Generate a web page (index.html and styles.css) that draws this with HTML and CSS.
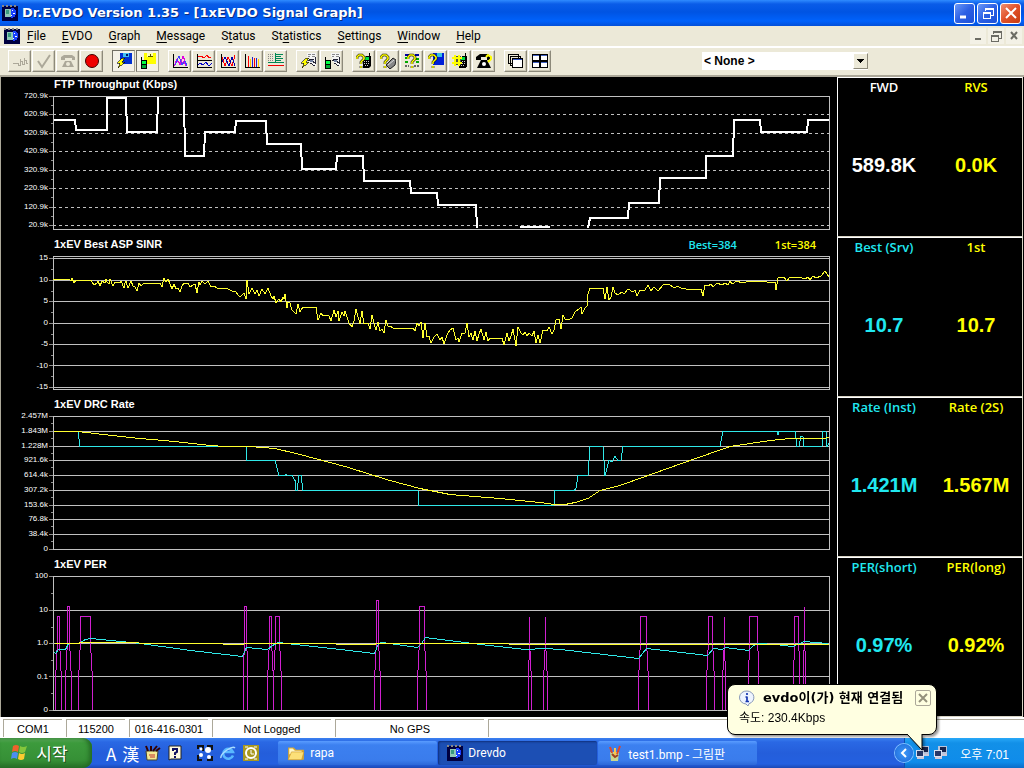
FILE: index.html
```html
<!DOCTYPE html>
<html lang="ko">
<head>
<meta charset="utf-8">
<title>Dr.EVDO Version 1.35 - [1xEVDO Signal Graph]</title>
<link rel="stylesheet" href="styles.css">
</head>
<body>
<svg class="defs" width="0" height="0" aria-hidden="true">
  <symbol id="app" viewBox="0 0 16 16"><path d="M0 1h16v15H0z" fill="#000040"/><path d="M0 1h2M4 1h2M8 1h2M12 1h2" stroke="#888" stroke-width="2"/><path d="M3 4h6v8H3z" fill="#8fc8b8"/><path d="M4 5h3v4H4z" fill="#3a9a80"/><path d="M9 3q6 0 5 6q-1 4-5 4z" fill="#1840ff"/><path d="M10 5h1v1h-1zM11 8h2v1h-2zM9 10h1v1H9z" fill="#fff"/></symbol>
  <symbol id="bolt" viewBox="0 0 16 16"><path d="M6 5L1 10h3l-2 5 7-6H6l3-4z" fill="#ff0" stroke="#000" stroke-width=".6"/></symbol>
  <symbol id="cell" viewBox="0 0 16 16"><path d="M1 4h1v3h5v9H1z" fill="#000"/><path d="M2 8h4v3H2z" fill="#0f4"/><path d="M2 12h4v3H2z" fill="#0a3"/></symbol>
  <symbol id="ask" viewBox="0 0 16 16"><path d="M1 6V4l2-2h3l2 2v2L5 9v2M5 13v2" fill="none" stroke="#000" stroke-width="2.600"/><path d="M1 6V4l2-2h3l2 2v2L5 9v2M5 13v2" fill="none" stroke="#ff0" stroke-width="1.600"/></symbol>
  <symbol id="handset" viewBox="0 0 16 16"><path d="M13 0h1v3h1v10l-2 2H7V6l3-3h3z" fill="#000"/><path d="M9 4h4v3H9z" fill="#0d4"/><path d="M8 8h1v1H8zM10 8h1v1h-1zM12 8h1v1h-1zM8 10h1v1H8zM10 10h1v1h-1zM12 10h1v1h-1zM9 12h1v1H9zM11 12h1v1h-1z" fill="#ccc"/></symbol>
  <symbol id="page" viewBox="0 0 16 16"><path d="M7 0h9v14l-4-3-4-3z" fill="#f4f4f4"/><path d="M8 1h3M12 1h3M8 3h2M12 3h3" stroke="#888"/><path d="M9 6h5M8 8l3-2M10 10l5 3M15 4v6l-3-2" stroke="#223" fill="none"/><path d="M10 7h3v2h-3z" fill="#7080a0"/></symbol>
  <symbol id="restore" viewBox="0 0 16 16"><path d="M5 6V3h8v7h-3M3 7h7v6H3zM3 8h7M5 4h8" fill="none" stroke="currentColor"/></symbol>
  <symbol id="nodes" viewBox="0 0 16 16"><path d="M5 1h9v8H5z" fill="#b8c4dc"/><path d="M7 2h6v5H7z" fill="#18244c"/><path d="M1 5h8v7H1z" fill="#d8e0f0"/><path d="M2 6h6v5H2z" fill="#283868"/><path d="M2 13h7M9 10h5" stroke="#d0c8d8" stroke-width="2"/></symbol>
</svg>

<header class="titlebar">
  <svg class="i16" shape-rendering="crispEdges"><use href="#app"/></svg>
  <h1>Dr.EVDO Version 1.35 - [1xEVDO Signal Graph]</h1>
  <div class="wincontrols">
    <button class="win" aria-label="Minimize"><svg class="i16"><path d="M3 12h6" stroke="#fff" stroke-width="3"/></svg></button>
    <button class="win" aria-label="Restore"><svg class="i16" shape-rendering="crispEdges"><use href="#restore"/></svg></button>
    <button class="win close" aria-label="Close"><svg class="i16"><path d="M3 3l10 10M13 3L3 13" stroke="#fff" stroke-width="2"/></svg></button>
  </div>
</header>

<nav class="menubar">
  <svg class="i16" shape-rendering="crispEdges"><use href="#app"/></svg>
  <div class="menus">
    <button><u>F</u>ile</button><button><u>E</u>VDO</button><button><u>G</u>raph</button><button><u>M</u>essage</button><button>S<u>t</u>atus</button><button>St<u>a</u>tistics</button><button><u>S</u>ettings</button><button><u>W</u>indow</button><button><u>H</u>elp</button>
  </div>
  <div class="mdi">
    <button aria-label="Minimize graph"><svg class="i16"><path d="M5 11h6" stroke="#6c6c64" stroke-width="2"/></svg></button>
    <button aria-label="Restore graph"><svg class="i16" shape-rendering="crispEdges"><use href="#restore"/></svg></button>
    <button aria-label="Close graph"><svg class="i16"><path d="M5 4l6 7M11 4l-6 7" stroke="#6c6c64" stroke-width="2"/></svg></button>
  </div>
</nav>

<div class="toolbar">
  <div class="group">
    <button aria-label="Connect"><svg class="i16" shape-rendering="crispEdges"><path d="M1 10h5v2h2V8h2v3h2V7h2v3h2M12 5v2M8 6v2" fill="none" stroke="#aca899"/></svg></button>
    <button aria-label="Apply"><svg class="i16"><path d="M2 8l4 6 8-12" fill="none" stroke="#aca899" stroke-width="2"/></svg></button>
    <button aria-label="Call"><svg class="i16"><path d="M1 7V4l3-2h8l3 2v3h-3V5H5v2zM2 14l3-6h6l3 6z" fill="#aca899"/><circle cx="8" cy="11" r="2" fill="#ece9d8"/></svg></button>
    <button aria-label="Stop"><svg class="i16"><circle cx="8" cy="8" r="6.500" fill="#f00000" stroke="#400"/></svg></button>
  </div>
  <div class="group">
    <button class="on" aria-label="Log to file"><svg class="i16" shape-rendering="crispEdges"><path d="M4 0h12v11H4z" fill="#0030d0"/><path d="M7 0h6v4H7z" fill="#40c0f0"/><path d="M10 1h2v2h-2z" fill="#001060"/><use href="#bolt"/></svg></button>
    <button class="on" aria-label="Log phone"><svg class="i16" shape-rendering="crispEdges"><path d="M4 0h12v11H4z" fill="#ff0"/><path d="M7 0h6v4H7z" fill="#ffa"/><path d="M8 3h5M10 1v2" stroke="#550"/><use href="#cell"/></svg></button>
  </div>
  <div class="group">
    <button aria-label="Signal graph"><svg class="i16" shape-rendering="crispEdges"><path d="M2 13L5 6l3 6 3-9 4 10M3 11l3-3 3 3 3-3 2 5" fill="none" stroke="#e000e0"/><path d="M3 12l4-9 3 9 3-4 2 5" fill="none" stroke="#4040ff"/><path d="M1.500 1v13.500h14" fill="none" stroke="#000"/></svg></button>
    <button aria-label="Dual graph"><svg class="i16" shape-rendering="crispEdges"><path d="M1.500 1v6.500h14M1.500 8v6.500h14" fill="none" stroke="#000"/><path d="M2 4l3-1 3 2 3-3 2 3 2-1" fill="none" stroke="#f00"/><path d="M2 12l2-2 3 2 3-3 3 4 3-3" fill="none" stroke="#00c"/></svg></button>
    <button aria-label="Line graph"><svg class="i16" shape-rendering="crispEdges"><path d="M2 4l3 9 3-9 4 9 3-11" fill="none" stroke="#f00"/><path d="M2 9l3-5 4 9 3-9 3 9" fill="none" stroke="#00a"/><path d="M1.500 1v13.500h14" fill="none" stroke="#000"/></svg></button>
    <button aria-label="Bar graph"><svg class="i16" shape-rendering="crispEdges"><path d="M4.500 3v11M10.500 5v9" stroke="#f00"/><path d="M6.500 6v8M14.500 6v8" stroke="#fc0"/><path d="M8.500 4v10M12.500 5v9" stroke="#22c"/><path d="M1.500 1v13.500h14" fill="none" stroke="#000"/></svg></button>
    <button aria-label="Message list"><svg class="i16" shape-rendering="crispEdges"><path d="M0 1.500h6M0 3.500h6M0 5.500h6M0 7.500h6" stroke="#888" stroke-dasharray="1 1"/><path d="M7.500 0v9M8 1.500h7M8 3.500h5M8 5.500h7M8 7.500h5M0 9.500h16" stroke="#085"/><path d="M0 13l3-1 3 1 3-1 3 1 4-1" fill="none" stroke="#e00"/></svg></button>
  </div>
  <div class="group">
    <button aria-label="Quick view"><svg class="i16" shape-rendering="crispEdges"><use href="#page"/><use href="#bolt"/></svg></button>
    <button aria-label="Phone view"><svg class="i16" shape-rendering="crispEdges"><use href="#page"/><use href="#cell"/></svg></button>
  </div>
  <div class="group">
    <button aria-label="Phone status"><svg class="i16"><use href="#handset"/><use href="#ask"/></svg></button>
    <button aria-label="Phone book"><svg class="i16"><path d="M6 12l7-7 3 2-1 5-5 4z" fill="#888" stroke="#222"/><path d="M8 12l6-5" stroke="#ddd"/><use href="#ask"/></svg></button>
    <button aria-label="Parameter status"><svg class="i16"><path d="M1 2h4M11 2h4" stroke="#0000a0" stroke-width="2"/><path d="M1 5h3M11 6h4M1 9h3M12 9h3" stroke="#0a0" stroke-width="2"/><path d="M1 13h4M10 13h5" stroke="#666" stroke-width="2" stroke-dasharray="2 1"/><svg x="3" width="16" height="16"><use href="#ask"/></svg></svg></button>
    <button aria-label="File status"><svg class="i16"><path d="M5 0h11v12H5z" fill="#0020d8"/><path d="M9 0h5v4H9z" fill="#38c0e0"/><use href="#ask"/></svg></button>
    <button aria-label="Dial number"><svg class="i16" shape-rendering="crispEdges"><use href="#handset"/><path d="M2 3h7v9H2z" fill="#554"/><path d="M3 2v11M7 2v11M0 5h10M0 10h10" stroke="#ff0" stroke-width="2"/></svg></button>
    <button aria-label="Call status"><svg class="i16"><path d="M0 7V4l4-3h8l3 3v3h-4V4H5v3zM1 15l4-8h6l4 8z" fill="#000"/><circle cx="8" cy="11" r="2" fill="#fff"/><path d="M10 4l2-2 3 2v2l-3 3" fill="none" stroke="#ff0" stroke-width="2"/></svg></button>
  </div>
  <div class="group">
    <button aria-label="Cascade"><svg class="i16" shape-rendering="crispEdges"><path d="M.5 1.500h10v9H.5zM2.500 3.500h10v9h-10z" fill="#ece9d8" stroke="#000"/><path d="M4.500 5.500h10v9h-10z" fill="#fff" stroke="#000"/><path d="M5 6.500h9" stroke="#3050c0"/></svg></button>
    <button aria-label="Tile"><svg class="i16" shape-rendering="crispEdges"><path d="M.5 1.500h15v13H.5z" fill="#fff" stroke="#000"/><path d="M1 2.500h14M1 9.500h14" stroke="#4060c0"/><path d="M8 1v14M1 8h14" stroke="#000" stroke-width="2"/></svg></button>
  </div>
  <span class="combo"><select aria-label="Marker"><option>&lt; None &gt;</option></select><svg class="drop" viewBox="0 0 16 16" shape-rendering="crispEdges"><path d="M4 6h8l-4 4z" fill="#000"/></svg></span>
</div>

<main>
  <section class="row">
    <div class="axis a1"><span>720.9k</span><span>620.9k</span><span>520.9k</span><span>420.9k</span><span>320.9k</span><span>220.9k</span><span>120.9k</span><span>20.9k</span></div>
    <div class="chart">
      <h2>FTP Throughput (Kbps)</h2>
      <svg class="plot" viewBox="49 96 781 134" preserveAspectRatio="none">
        <path class="tick" d="M49 96.500h4M49 114.500h4M49 133.500h4M49 151.500h4M49 170.500h4M49 188.500h4M49 207.500h4M49 225.500h4M51 105.500h2M51 123.500h2M51 142.500h2M51 160.500h2M51 179.500h2M51 197.500h2M51 216.500h2"/>
        <path class="grid dash" d="M53 114.500H829M53 133.500H829M53 151.500H829M53 170.500H829M53 188.500H829M53 207.500H829M53 225.500H829"/>
        <path class="grid" d="M53.500 96.500H829.500V229.500H53.500z"/>
        <path class="line white" d="M54 120H75L76 130H107V98H126L127 132H157L158 97M184 97L185 156H204L205 132H235L236 121H266L267 144H301L302 169H336L337 156H363L364 181H410L411 193H437L438 205H476L477 228M520 227H550M588 228L590 218H628L629 203H659L660 178H706V156H733L734 120H760L761 132H807L808 120H829"/>
      </svg>
    </div>
    <dl class="values"><div class="w"><dt>FWD</dt><dd>589.8K</dd></div><div class="y"><dt>RVS</dt><dd>0.0K</dd></div></dl>
  </section>

  <section class="row">
    <div class="axis a2"><span>15</span><span>10</span><span>5</span><span>0</span><span>-5</span><span>-10</span><span>-15</span></div>
    <div class="chart">
      <div class="head"><h2>1xEV Best ASP SINR</h2><span class="c">Best=384</span><span class="y">1st=384</span></div>
      <svg class="plot" viewBox="49 256 781 134" preserveAspectRatio="none">
        <path class="tick" d="M49 258.500h4M49 280.500h4M49 301.500h4M49 323.500h4M49 344.500h4M49 365.500h4M49 387.500h4M51 269.500h2M51 291.500h2M51 312.500h2M51 334.500h2M51 355.500h2M51 376.500h2"/>
        <path class="grid" d="M53.500 256.500H829.500V389.500H53.500zM53 258.500H829M53 280.500H829M53 301.500H829M53 323.500H829M53 344.500H829M53 365.500H829M53 387.500H829"/>
        <polyline class="line yellow" points="53,280 56,279 58,280 62,279 66,279 70,280 71,281 72,278 74,283 76,280 91,280 94,285 97,283 98,281 100,286 102,281 105,283 106,279 107,282 109,284 110,279 113,286 115,282 118,282 120,283 121,281 124,288 125,283 126,281 128,288 131,281 133,286 135,287 137,291 139,283 141,286 144,283 160,283 162,287 164,278 166,282 168,279 170,284 172,289 174,284 176,289 178,288 180,292 182,286 184,283 186,284 188,283 190,287 195,284 197,293 199,282 200,285 202,281 205,284 208,281 211,287 214,286 217,288 226,288 232,291 235,291 239,296 241,296 244,293 246,299 247,280 249,294 252,288 255,294 257,290 259,296 262,289 265,294 268,288 271,296 273,299 274,296 276,303 279,299 281,302 283,297 284,299 285,294 287,308 288,302 290,303 292,310 296,314 298,304 300,312 303,307 316,307 318,320 321,313 323,316 325,315 329,316 331,321 334,310 336,317 338,311 339,321 342,312 344,316 345,311 349,323 352,327 354,321 356,309 360,324 362,311 364,324 368,323 370,329 372,315 375,327 376,330 378,322 380,331 382,329 384,333 386,320 388,326 390,326 393,328 413,328 415,331 417,323 419,326 421,322 423,338 425,323 427,337 429,336 431,343 434,337 437,334 440,340 442,337 444,344 447,335 450,330 453,328 456,340 458,338 459,342 462,333 465,333 467,323 469,337 471,333 473,340 475,331 477,341 479,334 481,329 484,340 486,332 488,341 490,338 502,338 504,345 507,333 509,341 511,336 513,329 516,346 518,327 521,333 523,335 525,332 527,336 529,333 532,336 534,331 536,343 538,335 540,343 543,330 547,331 549,327 552,334 554,330 556,320 559,319 561,329 563,315 565,319 568,320 572,318 575,312 579,309 581,307 582,314 585,308 587,306 587,297 590,288 603,288 605,299 607,287 609,300 611,297 613,287 615,293 618,295 622,292 624,294 628,289 633,292 635,290 637,296 640,290 645,290 648,285 651,291 654,287 658,291 663,285 668,284 675,288 677,286 681,288 686,289 701,289 703,296 705,285 708,286 711,284 713,287 717,283 722,285 725,283 728,285 730,281 732,284 737,281 742,283 750,281 760,281 767,282 775,282 776,290 778,278 784,277 787,281 790,277 802,278 805,279 808,277 810,280 813,276 816,278 821,276 825,271 829,277"/>
      </svg>
    </div>
    <dl class="values"><div class="c"><dt>Best (Srv)</dt><dd>10.7</dd></div><div class="y"><dt>1st</dt><dd>10.7</dd></div></dl>
  </section>

  <section class="row">
    <div class="axis a3"><span>2.457M</span><span>1.843M</span><span>1.228M</span><span>921.6k</span><span>614.4k</span><span>307.2k</span><span>153.6k</span><span>76.8k</span><span>38.4k</span><span>0</span></div>
    <div class="chart">
      <h2>1xEV DRC Rate</h2>
      <svg class="plot" viewBox="49 416 781 134" preserveAspectRatio="none">
        <path class="tick" d="M49 416.500h4M49 431.500h4M49 446.500h4M49 460.500h4M49 475.500h4M49 490.500h4M49 505.500h4M49 519.500h4M49 534.500h4M49 549.500h4M51 423.500h2M51 438.500h2M51 453.500h2M51 467.500h2M51 482.500h2M51 497.500h2M51 512.500h2M51 526.500h2M51 541.500h2"/>
        <path class="grid" d="M53.500 416.500H829.500V549.500H53.500zM53 431.500H829M53 446.500H829M53 460.500H829M53 475.500H829M53 490.500H829M53 505.500H829M53 519.500H829M53 534.500H829"/>
        <g transform="translate(0 .5)">
          <path class="line cyan" d="M54 431H78L80 446H246L247 460H275L279 475H285L286 474L288 475H292L295 480L296 490H297L299 475H301L303 490H418L419 505H554L555 490H574L576 488L578 475H588L590 446H603L605 475L609 460L612 461L615 456L618 460H621L623 446H720L723 431H777L778 434L779 431H795L797 446H799L801 436H803L804 446H822L823 431H826L827 446L829 443"/>
          <polyline class="line yellow" points="54,431 78,431 103,434 140,438 175,441 210,445 225,446 250,446 275,448 300,454 345,466 390,480 420,488 450,494 500,498 540,502 555,504 565,504 575,502 588,498 600,490 620,485 648,475 690,460 730,446 750,443 770,440 790,438 823,438 829,437"/>
        </g>
      </svg>
    </div>
    <dl class="values"><div class="c"><dt>Rate (Inst)</dt><dd>1.421M</dd></div><div class="y"><dt>Rate (2S)</dt><dd>1.567M</dd></div></dl>
  </section>

  <section class="row">
    <div class="axis a4"><span>100</span><span>10</span><span>1.0</span><span>0.1</span><span>0</span></div>
    <div class="chart last">
      <h2>1xEV PER</h2>
      <svg class="plot" viewBox="49 576 781 135" preserveAspectRatio="none">
        <path class="tick" d="M49 576.500h4M49 610.500h4M49 643.500h4M49 676.500h4M49 710.500h4M51 593.500h2M51 627.500h2M51 660.500h2M51 693.500h2"/>
        <path class="grid" d="M53.500 576.500H829.500V710.500H53.500zM53 610.500H829M53 643.500H829M53 676.500H829"/>
        <g transform="translate(.5 .5)">
          <path class="line magenta" d="M55 709V680L57 640V616H59V640L61 680V709M65 709V680L67 640V606H69V640L71 680V709M78 709V680L80 640V616H90V643L92 680V709M243 709V680L244 630V606H246V640L247 660V709M267 709V680L269 640V616H271V640L273 680V709V680L275 640V616H279V640L281 680V709M374 709V680L376 640V600H378V640L380 680V709M417 709V680L419 640V606H424V640L426 680V709M528 709V680L529 640V616V640L531 680V709M543 709V680L545 640V616V640L547 680V709M638 709V680L640 640V616H646V640L648 680V709M706 709V680L708 640V616H712V640L714 680V709M722 709V680L724 640V616V640L725 680V709M748 709V680L749 640V616H757V640L758 660V709M793 709V680L794 640V616H798V640L799 660V709M803 709V660L804 640V606V640L805 660V709"/>
          <polyline class="line cyan" points="54,652 55,653 58,649 65,649 68,643 78,643 85,639 91,638 100,639 140,643 190,650 242,656 246,647 267,649 272,645 278,642 295,644 340,649 374,653 378,643 382,642 417,647 421,643 425,637 440,639 480,644 525,649 545,648 560,649 638,658 646,648 655,649 707,655 713,648 722,649 725,647 748,650 753,645 758,643 775,644 792,646 799,643 804,641 815,642 828,643"/>
          <polyline class="line yellow" points="54,643 78,643 80,642 138,642 139,643 222,643 223,644 243,644 244,643 335,643 336,644 374,644 376,643 508,643 509,644 828,644"/>
        </g>
      </svg>
    </div>
    <dl class="values"><div class="c"><dt>PER(short)</dt><dd>0.97%</dd></div><div class="y"><dt>PER(long)</dt><dd>0.92%</dd></div></dl>
  </section>
</main>

<footer class="statusbar">
  <span>COM1</span><span>115200</span><span class="num">016-416-0301</span><span class="log">Not Logged</span><span class="gps">No GPS</span><span class="rest"></span>
</footer>

<div class="taskbar">
  <button class="start"><svg class="flag" viewBox="0 0 20 18"><path d="M3 3q3-2 6 0L8 9Q5 7 2 9z" fill="#f0622c"/><path d="M10 3q3 2 7 0l-2 6q-3 2-6 0z" fill="#84c63c"/><path d="M2 10q3-2 6 0l-1 6q-3-2-6 0z" fill="#4c8ef0"/><path d="M9 10q3 2 6 0l-1 6q-3 2-6 0z" fill="#fccc30"/></svg>시작</button>
  <div class="ime"><button aria-label="Input mode">A</button><button aria-label="Hanja">漢</button>
    <button aria-label="Drawing"><svg class="i16"><path d="M1 6h12l-1 9H2z" fill="#f4e890" stroke="#443"/><path d="M3 6L1 1M6 6V1M8 6l4-5M11 6l4-3" stroke="#300" stroke-width="2"/><path d="M4 10h6M5 12h5" stroke="#c03030"/></svg></button>
    <button aria-label="Help"><svg class="i16"><path d="M2 1h12v13H4l-2 1z" fill="#fffbe0" stroke="#222"/><path d="M6 6V4h4v3L8 8v2M8 11v2" fill="none" stroke="#101060" stroke-width="2"/></svg></button></div>
  <div class="quick">
    <button aria-label="Network"><svg class="i16"><path d="M1 4V1h5v5M10 1h5v4M1 10v5h4M10 15h5v-4" fill="none" stroke="#111" stroke-width="2"/><circle cx="4" cy="4" r="1.500" fill="#fff"/><circle cx="11" cy="5" r="3" fill="#fff"/><circle cx="4" cy="10" r="2" fill="#fff"/><circle cx="12" cy="12" r="2" fill="#fff"/></svg></button>
    <button aria-label="Internet Explorer"><svg class="i16"><path d="M13 10.500A5 5 0 1 1 13 7H5" fill="none" stroke="#58b8ff" stroke-width="2.500"/><path d="M1 13Q0 10 7 5q6-4 8-2" fill="none" stroke="#a8dcff" stroke-width="1.500"/></svg></button>
    <button aria-label="Outlook"><svg class="i16"><path d="M0 0h16v16H0z" fill="#a89820"/><circle cx="8" cy="8" r="5" fill="#a89820" stroke="#fff" stroke-width="2"/><path d="M8 5v4h3M2 2h3M2 14h3M11 2h3M11 14h3" fill="none" stroke="#fff"/></svg></button>
  </div>
  <div class="tasks">
    <button><svg class="i18" viewBox="0 0 16 16"><path d="M1 3h5l2 2h7v9H1z" fill="#d8a830"/><path d="M2 4h3l2 2h6v3H2z" fill="#fff8c8"/><path d="M1 14L4 7h11l-2 7z" fill="#fce078" stroke="#c89020" stroke-width=".5"/></svg>rapa</button>
    <button class="active"><svg class="i16" shape-rendering="crispEdges"><use href="#app"/></svg>Drevdo</button>
    <button><svg class="i16"><path d="M3 7h9l-1 9H4z" fill="#c8d890"/><path d="M5 8L3 2M10 9l3-8" stroke="#e04828" stroke-width="2"/><path d="M8 10V3" stroke="#f8c850" stroke-width="2"/><path d="M5 9l3 3 3-2" stroke="#a04020" fill="none" stroke-width="2"/></svg>test1.bmp - 그림판</button>
  </div>
  <div class="tray">
    <button class="expand" aria-label="Show hidden icons"><svg viewBox="0 0 18 18" width="18" height="18"><path d="M11 5L7 9l4 4" fill="none" stroke="#fff" stroke-width="2"/></svg></button>
    <svg class="i16"><use href="#nodes"/></svg><svg class="i16"><use href="#nodes"/></svg>
    <time>오후 7:01</time>
  </div>
  <aside class="balloon" role="status">
    <div class="bhead"><svg class="i16" viewBox="0 0 16 16"><path d="M8 1a7 6.500 0 0 1 2 12.700L9 16l-2-2A7 6.500 0 0 1 8 1z" fill="#eef4ff" stroke="#8898b8"/><path d="M8 6.500v5M6.500 7H8M6.500 11.500h3.500M8 3v2" stroke="#1838b0" stroke-width="1.700"/></svg>
    <strong>evdo이(가) 현재 연결됨</strong>
    <button aria-label="Close notification"><svg viewBox="0 0 14 14" width="14" height="14"><path d="M3 3l8 8M11 3l-8 8" stroke="#94917c" stroke-width="2"/></svg></button></div>
    <p>속도: 230.4Kbps</p>
    <svg class="tail" viewBox="0 0 18 18"><path d="M1 0L16 16V0" fill="#ffffe1" stroke="#000"/></svg>
  </aside>
</div>
</body>
</html>
```
FILE: styles.css
```css
* { box-sizing: border-box; }
body {
  margin: 0;
  min-height: 100vh;
  display: flex;
  flex-direction: column;
  background: #ece9d8;
  color: #000;
  font-family: "Liberation Sans", "Noto Sans CJK KR", sans-serif;
  font-size: 12px;
}
button { margin: 0; padding: 0; border: 0; background: none; color: inherit; font: inherit; display: flex; align-items: center; justify-content: center; }
h1, h2, dl, dd, p { margin: 0; }
svg { display: block; flex: none; }
.defs { position: absolute; }
.i16 { width: 16px; height: 16px; }
.i18 { width: 18px; height: 18px; }

/* Title bar */
.titlebar {
  height: 26px;
  display: flex;
  align-items: center;
  gap: 4px;
  padding: 0 3px 0 2px;
  color: #fff;
  background: linear-gradient(#2f8bff 0, #0a5ce8 4px, #0054e3 12px, #0062fc 21px, #0450d8 100%);
}
.titlebar h1 { flex: 1; font: bold 13px/20px "DejaVu Sans", sans-serif; text-shadow: 1px 1px #0a2a80; white-space: nowrap; }
.wincontrols { display: flex; gap: 2px; }
.win { width: 21px; height: 21px; border: 1px solid #fff; border-radius: 3px; background: linear-gradient(135deg, #6a98f8, #2c60e4 50%, #1c50d8); }
.close { background: linear-gradient(135deg, #f09070, #e05028 50%, #c83c10); }

/* Menu bar */
.menubar { height: 21px; display: flex; align-items: center; padding: 0 2px 0 4px; border-bottom: 1px solid #fff; }
.menus { flex: 1; display: flex; gap: 16px; padding-left: 7px; font-family: Roboto, sans-serif; font-size: 12px; line-height: 16px; }
.menus button { display: block; }
.menus u { text-underline-offset: 2px; }
.mdi { display: flex; gap: 2px; color: #6c6c64; }
.mdi button { width: 16px; height: 16px; background: #f3f1e6; }

/* Toolbar */
.toolbar { height: 30px; display: flex; align-items: center; gap: 9px; padding: 0 156px 1px 8px; border-top: 1px solid #fff; border-bottom: 2px solid #aca899; }
.group { display: flex; gap: 1px; }
.toolbar button { width: 23px; height: 22px; border: 1px solid; border-color: #fff #8c897a #8c897a #fff; box-shadow: inset -1px -1px #cac6b4; }
.toolbar .on { border-color: #716f64 #aaa79a #aaa79a #716f64; background: #f4f2e8; box-shadow: none; }
.combo { display: grid; width: 166px; height: 18px; margin-left: auto; background: #fff; align-items: center; }
.combo > * { grid-area: 1 / 1; }
.combo select { appearance: none; width: 100%; height: 18px; border: 0; border-radius: 0; padding: 0 18px 0 2px; background: #fff; color: #000; font: bold 12px "Liberation Sans", sans-serif; }
.drop { width: 15px; height: 16px; justify-self: end; background: #ece9d8; border: 1px solid; border-color: #fff #8c897a #8c897a #fff; pointer-events: none; }

/* Graph rows */
main { flex: 1; display: grid; grid-template-rows: repeat(4, minmax(160px, 1fr)); background: #000; color: #fff; border-left: 1px solid #aca899; padding-right: 1px; }
.row { display: grid; grid-template-columns: 48px minmax(0, 1fr) 186px; }
.axis { display: flex; flex-direction: column; justify-content: space-between; align-items: flex-end; font-size: 8px; line-height: 12px; }
.axis span { padding-right: 1px; }
.a1 { padding: 13px 0 6px; }
.a2 { padding: 15px 0 4px; }
.a3 { padding: 13px 0 2px; }
.a4 { padding: 13px 0 1px; }
.chart { display: flex; flex-direction: column; padding: 0 7px 7px 0; }
.last { padding-bottom: 6px; }
.chart h2 { height: 19px; padding-left: 5px; font-size: 11px; line-height: 15px; flex: none; }
.head { display: flex; gap: 38px; padding-right: 14px; font: 600 11px/16px "Open Sans", sans-serif; height: 19px; }
.head h2 { flex: 1; font-family: "Liberation Sans", sans-serif; }
.plot { flex: 1; width: 100%; min-height: 0; height: 134px; shape-rendering: crispEdges; }
.plot path, .plot polyline { fill: none; vector-effect: non-scaling-stroke; }
.grid { stroke: #c0c0c0; }
.tick { stroke: #909090; }
.dash { stroke-dasharray: 3 3; }
.white { stroke: #fff; stroke-width: 2; }
.yellow { stroke: #ffff30; }
.cyan { stroke: #30e8e8; }
.magenta { stroke: #d020d0; }
.values { display: grid; grid-template-columns: 1fr 1fr; border: 1px solid; border-color: #fff #d8d4c4 #d8d4c4 #fff; text-align: center; }
.values div { display: flex; flex-direction: column; }
.values dt { font: 600 13px/18px "Open Sans", sans-serif; }
.values dd { flex: 1; display: flex; align-items: center; justify-content: center; font-weight: bold; font-size: 20px; padding-bottom: 2px; }
.w { color: #fff; }
.y { color: #ff0; }
.c { color: #20e8f0; }

/* Status bar */
.statusbar { height: 21px; display: flex; gap: 4px; padding: 2px 0 1px 3px; background: #fff; font-size: 11px; line-height: 18px; text-align: center; }
.statusbar span { width: 59px; border: solid #aca899; border-width: 1px 0 0 1px; white-space: nowrap; }
.statusbar .num { width: 79px; }
.statusbar .log { width: 119px; }
.statusbar .gps { width: 149px; }
.statusbar .rest { width: auto; flex: 1; }

/* Taskbar */
.taskbar { position: relative; height: 30px; display: flex; color: #fff; background: linear-gradient(#3a80f0 0, #2a68e4 4px, #245edb 50%, #2460e0 26px, #1c48b4 100%); }
.start { width: 92px; gap: 6px; padding: 0 14px 2px 0; border-radius: 0 9px 9px 0; font-size: 17px; background: linear-gradient(#60b060 0, #3c9a3c 5px, #369036 22px, #287028 100%); box-shadow: inset -3px 0 4px #246c24; text-shadow: 1px 1px #205020; }
.flag { width: 20px; height: 18px; }
.ime { display: flex; align-items: center; gap: 6px; padding-left: 14px; font: 17px "Noto Sans CJK KR", sans-serif; }
.quick { display: flex; align-items: center; gap: 7px; padding-left: 14px; }
.tasks { flex: 1; display: flex; gap: 1px; padding: 3px 0 3px 19px; }
.tasks button { width: 159px; justify-content: flex-start; gap: 5px; padding: 0 9px; border-radius: 2px; background: linear-gradient(#5a9cff, #3c80f0 4px, #3a7cec 80%, #2c68d8); font-size: 12px; font-family: Roboto, "Noto Sans CJK KR", sans-serif; white-space: nowrap; }
.tasks .active { background: #1c4fb4; box-shadow: inset 1px 1px 2px #10307c; }
.tray { width: 120px; display: flex; align-items: center; gap: 2px; background: linear-gradient(#28a8f8 0, #1290e8 5px, #0f8cea 80%, #0c6cc8); border-left: 1px solid #1050b0; font-size: 12px; padding-right: 15px; }
.tray time { margin-left: auto; white-space: nowrap; }
.expand { width: 18px; height: 18px; border-radius: 50%; margin-left: -10px; background: radial-gradient(#3c98f8, #1c68d8); box-shadow: 0 0 0 1px #80c0ff; }

/* Balloon */
.balloon { position: absolute; right: 87px; bottom: 33px; width: 210px; height: 51px; padding: 4px 5px 4px 11px; border: 1px solid #000; border-radius: 8px; background: #ffffe1; color: #000; filter: drop-shadow(2px 2px 1px #0006); }
.bhead { display: flex; align-items: center; gap: 8px; height: 17px; }
.bhead strong { flex: 1; font: bold 13px/17px "DejaVu Sans", "Noto Sans CJK KR", sans-serif; white-space: nowrap; }
.bhead button { width: 16px; height: 16px; border: 1px solid #aca899; border-radius: 2px; }
.balloon p { font-size: 12px; line-height: 18px; padding-top: 3px; }
.tail { position: absolute; left: 178px; top: 49px; width: 18px; height: 18px; }
```
